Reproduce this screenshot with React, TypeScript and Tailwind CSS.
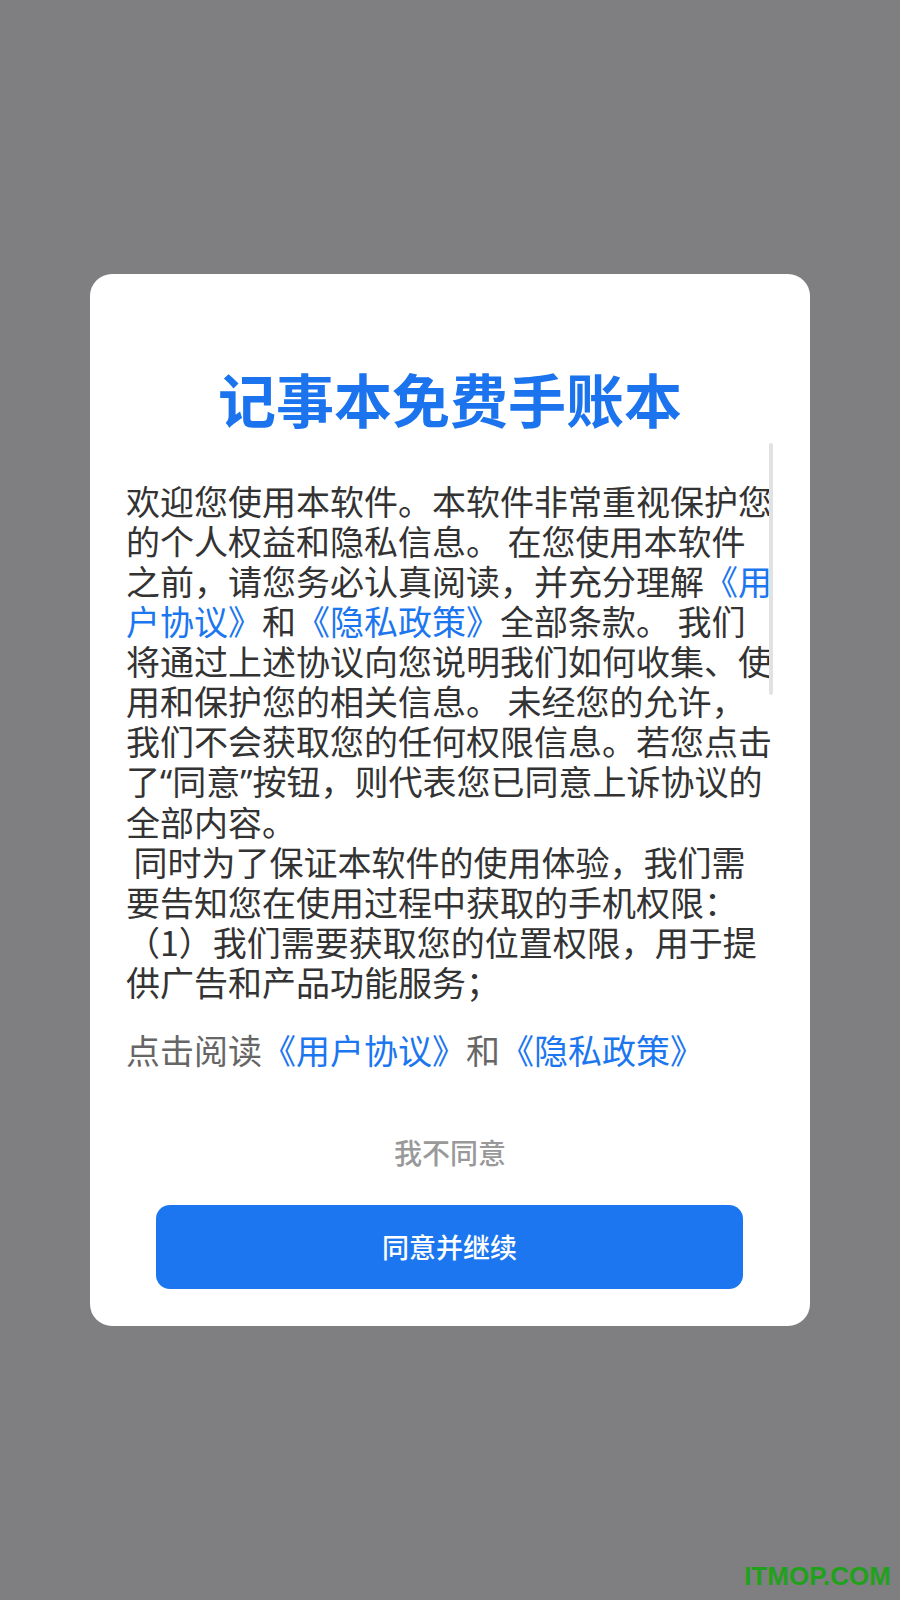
const blue = 'text-[#1b76ef]';

function Link({ children }: { children: React.ReactNode }) {
    return <span className={blue}>{children}</span>;
}

function Q({ children }: { children: React.ReactNode }) {
    // the reference draws curly quotes narrow, not full width
    return <span style={{ fontFamily: '"Noto Sans", sans-serif' }}>{children}</span>;
}

const lines: React.ReactNode[] = [
    '欢迎您使用本软件。本软件非常重视保护您',
    '的个人权益和隐私信息。 在您使用本软件',
    <>之前，请您务必认真阅读，并充分理解<Link>《用</Link></>,
    <><Link>户协议》</Link>和<Link>《隐私政策》</Link>全部条款。 我们</>,
    '将通过上述协议向您说明我们如何收集、使',
    '用和保护您的相关信息。 未经您的允许，',
    '我们不会获取您的任何权限信息。若您点击',
    <>了<Q>“</Q>同意<Q>”</Q>按钮，则代表您已同意上诉协议的</>,
    '全部内容。',
    ' 同时为了保证本软件的使用体验，我们需',
    '要告知您在使用过程中获取的手机权限：',
    '（1）我们需要获取您的位置权限，用于提',
    '供广告和产品功能服务；',
    '（2）我们需要获取您的存储权限，用于保',
];

export default function App() {
    return (
        <div
            className="h-[1600px] w-[900px] bg-[#7f7f81] flex items-center justify-center relative"
            style={{ fontFamily: '"Noto Sans CJK SC", "Noto Sans", sans-serif' }}
        >
            <div className="w-[720px] h-[1052px] bg-white rounded-[22px] flex flex-col pt-[90px]">
                <h1 className="text-center text-[58px] leading-[68px] font-bold text-[#1b74ee]">
                    记事本免费手账本
                </h1>
                <div className="relative mt-[11px] ml-[36px] w-[650px] h-[559px] overflow-hidden pt-[38px]">
                    <div className="text-[34px] leading-[40px] text-[#333333]">
                        {lines.map((line, i) => (
                            <div key={i} className="whitespace-pre">
                                {line}
                            </div>
                        ))}
                    </div>
                    <div className="absolute right-[3px] top-0 w-[4px] h-[252px] bg-[#e2e2e2] rounded-full" />
                </div>
                <p className="mt-[28px] ml-[36px] text-[34px] leading-[40px] text-[#666666]">
                    点击阅读<Link>《用户协议》</Link>和<Link>《隐私政策》</Link>
                </p>
                <button className="mt-[62px] mx-auto text-[28px] leading-[40px] font-medium text-[#999999]">
                    我不同意
                </button>
                <button className="mt-[33px] ml-[66px] w-[587px] h-[84px] rounded-[14px] bg-[#1b76ef] text-white text-[27px] font-medium">
                    同意并继续
                </button>
            </div>
            <div
                className="absolute right-[9px] bottom-[11px] text-[26px] leading-[26px] font-bold text-[#21a11b]"
                style={{ fontFamily: '"Liberation Sans", sans-serif' }}
            >
                ITMOP.COM
            </div>
        </div>
    );
}
